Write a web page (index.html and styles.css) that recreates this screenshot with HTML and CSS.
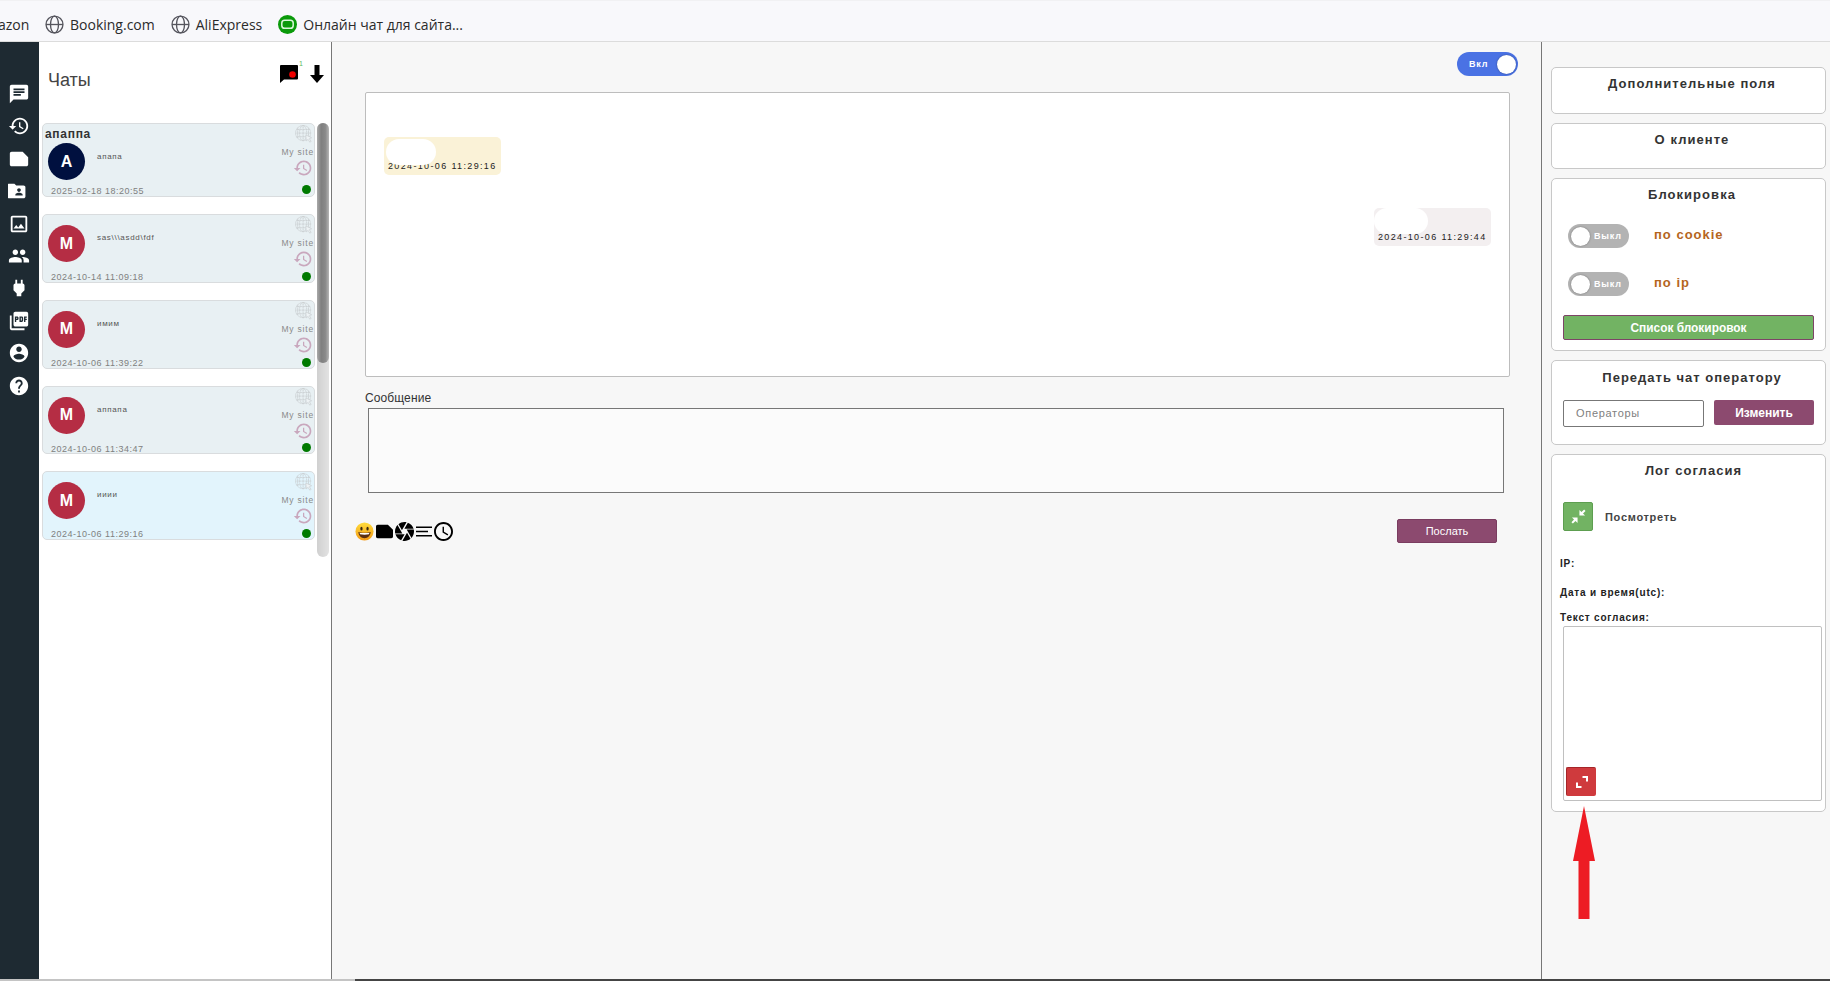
FILE: index.html
```html
<!DOCTYPE html>
<html lang="ru">
<head>
<meta charset="utf-8">
<title>Чаты</title>
<link rel="stylesheet" href="styles.css">
</head>
<body>
<svg class="defs" width="0" height="0">
  <symbol id="i-chat" viewBox="0 0 24 24"><path d="M20 2H4c-1.1 0-2 .9-2 2v18l4-4h14c1.1 0 2-.9 2-2V4c0-1.100-.9-2-2-2zM6 9h12v2H6V9zm8 5H6v-2h8v2zm4-6H6V6h12v2z"/></symbol>
  <symbol id="i-history" viewBox="0 0 24 24"><path d="M13 3c-4.970 0-9 4.030-9 9H1l3.890 3.890.07.14L9 12H6c0-3.870 3.130-7 7-7s7 3.130 7 7-3.130 7-7 7c-1.930 0-3.680-.79-4.940-2.060l-1.420 1.420C8.270 19.990 10.510 21 13 21c4.970 0 9-4.030 9-9s-4.030-9-9-9zm-1 5v5l4.280 2.540.72-1.210-3.500-2.080V8H12z"/></symbol>
  <symbol id="i-note" viewBox="0 0 24 24"><path d="M22 10l-6-6H4c-1.100 0-2 .9-2 2v12.010c0 1.100.9 1.990 2 1.990l16-.01c1.100 0 2-.89 2-1.990v-8z"/></symbol>
  <symbol id="i-folder" viewBox="0 0 24 24"><path d="M20 6h-8l-2-2H4c-1.100 0-1.990.9-1.990 2L2 18c0 1.100.9 2 2 2h16c1.100 0 2-.9 2-2V8c0-1.100-.9-2-2-2zm-5 3c1.100 0 2 .9 2 2s-.9 2-2 2-2-.9-2-2 .9-2 2-2zm4 8h-8v-1c0-1.330 2.670-2 4-2s4 .67 4 2v1z" transform="translate(-3 0)"/></symbol>
  <symbol id="i-image" viewBox="0 0 24 24"><path d="M19 5v14H5V5h14m0-2H5c-1.100 0-2 .9-2 2v14c0 1.100.9 2 2 2h14c1.100 0 2-.9 2-2V5c0-1.100-.9-2-2-2zm-4.860 8.860l-3 3.870L9 13.140 6 17h12l-3.860-5.140z"/></symbol>
  <symbol id="i-people" viewBox="0 0 24 24"><path d="M16 11c1.660 0 2.990-1.340 2.990-3S17.660 5 16 5c-1.660 0-3 1.340-3 3s1.340 3 3 3zm-8 0c1.660 0 2.990-1.340 2.990-3S9.660 5 8 5C6.340 5 5 6.340 5 8s1.340 3 3 3zm0 2c-2.330 0-7 1.170-7 3.500V19h14v-2.500c0-2.330-4.670-3.500-7-3.500zm8 0c-.29 0-.62.02-.97.05 1.160.84 1.970 1.970 1.970 3.450V19h6v-2.500c0-2.330-4.670-3.500-7-3.500z"/></symbol>
  <symbol id="i-power" viewBox="0 0 24 24"><path d="M16.010 7L16 3h-2v4h-4V3H8v4h-.01C7 6.990 6 7.990 6 8.990v5.490L9.500 18v3h5v-3l3.500-3.510v-5.500c0-1-1-2-1.990-1.990z"/></symbol>
  <symbol id="i-pdf" viewBox="0 0 24 24"><path d="M20 2H8c-1.100 0-2 .9-2 2v12c0 1.100.9 2 2 2h12c1.100 0 2-.9 2-2V4c0-1.100-.9-2-2-2zm-8.500 7.500c0 .83-.67 1.500-1.500 1.500H9v2H7.500V7H10c.83 0 1.500.67 1.500 1.500v1zm5 2c0 .83-.67 1.500-1.500 1.500h-2.500V7H15c.83 0 1.500.67 1.500 1.500v3zm4-3H19v1h1.500V11H19v2h-1.500V7h3v1.500zM9 9.500h1v-1H9v1zM4 6H2v14c0 1.100.9 2 2 2h14v-2H4V6zm10 5.500h1v-3h-1v3z"/></symbol>
  <symbol id="i-account" viewBox="0 0 24 24"><path d="M12 2C6.480 2 2 6.480 2 12s4.480 10 10 10 10-4.480 10-10S17.520 2 12 2zm0 3c1.660 0 3 1.340 3 3s-1.340 3-3 3-3-1.340-3-3 1.340-3 3-3zm0 14.200c-2.500 0-4.710-1.280-6-3.220.03-1.990 4-3.080 6-3.080 1.990 0 5.970 1.090 6 3.080-1.290 1.940-3.500 3.220-6 3.220z"/></symbol>
  <symbol id="i-help" viewBox="0 0 24 24"><path d="M12 2C6.480 2 2 6.480 2 12s4.480 10 10 10 10-4.480 10-10S17.520 2 12 2zm1 17h-2v-2h2v2zm2.070-7.750l-.9.92C13.450 12.900 13 13.500 13 15h-2v-.5c0-1.100.45-2.100 1.170-2.830l1.240-1.260c.37-.36.59-.86.59-1.410 0-1.100-.9-2-2-2s-2 .9-2 2H8c0-2.210 1.790-4 4-4s4 1.790 4 4c0 .88-.36 1.680-.93 2.250z"/></symbol>
  <symbol id="i-globe" viewBox="0 0 20 20"><g fill="none" stroke="currentColor" stroke-width="1.400"><circle cx="10" cy="10" r="8.900"/><ellipse cx="10" cy="10" rx="4.200" ry="8.900"/><path d="M1.100 10h17.800"/></g></symbol>
  <symbol id="i-site" viewBox="0 0 20 20"><g fill="none" stroke="currentColor" stroke-width=".9" stroke-dasharray="1.200 .5"><circle cx="9" cy="9" r="8.400"/><ellipse cx="9" cy="9" rx="4" ry="8.400"/><path d="M.6 9h16.800M1.800 5h14.400M1.800 13h14.400M9 .6v16.800M3 3v12M15 3v12"/></g><path d="M12 11l6.500 3.200-2.600 1 2 3-1.500.8-1.800-3-2 1.600z" fill="#eef3f5" stroke="currentColor" stroke-width=".7"/></symbol>
</svg>

<header class="bookmarks">
  <span class="bm bm-clipped">azon</span>
  <span class="bm"><svg class="bm-ic"><use href="#i-globe"/></svg>Booking.com</span>
  <span class="bm"><svg class="bm-ic"><use href="#i-globe"/></svg>AliExpress</span>
  <span class="bm"><svg class="bm-ic" viewBox="0 0 20 20"><circle cx="10" cy="10" r="10" fill="#0b9a0b"/><rect x="4" y="5.500" width="12" height="8.500" rx="3" fill="none" stroke="#d9f5d9" stroke-width="1.600"/></svg>Онлайн чат для сайта...</span>
</header>

<div class="app">
  <nav class="rail">
    <svg class="rail-ic"><use href="#i-chat"/></svg>
    <svg class="rail-ic"><use href="#i-history"/></svg>
    <svg class="rail-ic"><use href="#i-note"/></svg>
    <svg class="rail-ic"><use href="#i-folder"/></svg>
    <svg class="rail-ic"><use href="#i-image"/></svg>
    <svg class="rail-ic"><use href="#i-people"/></svg>
    <svg class="rail-ic"><use href="#i-power"/></svg>
    <svg class="rail-ic"><use href="#i-pdf"/></svg>
    <svg class="rail-ic"><use href="#i-account"/></svg>
    <svg class="rail-ic"><use href="#i-help"/></svg>
  </nav>

  <aside class="chats">
    <div class="chats-head">
      <h1 class="chats-title">Чаты</h1>
      <div class="chats-tools">
        <span class="notif">
          <svg class="notif-ic" viewBox="0 0 18 18"><path d="M1 0h16a1 1 0 0 1 1 1v12.500a1 1 0 0 1-1 1H4L0 18V1a1 1 0 0 1 1-1z"/><circle cx="12.500" cy="9.500" r="3.300" fill="#f00000"/></svg>
          <span class="notif-count">1</span>
        </span>
        <svg class="down-ic" viewBox="0 0 14 18"><path d="M4.500 0h5v10H14l-7 8-7-8h4.500z"/></svg>
      </div>
    </div>
    <div class="chats-scroll">
      <div class="chat-list">
        <article class="card">
          <div class="card-left">
            <div class="card-name">апаппа</div>
            <div class="card-body"><span class="avatar avatar-navy">A</span><span class="card-msg">апапа</span></div>
            <div class="card-date card-date-first">2025-02-18 18:20:55</div>
          </div>
          <div class="card-right">
            <svg class="site-ic"><use href="#i-site"/></svg>
            <span class="site-name">My site</span>
            <svg class="hist-ic"><use href="#i-history"/></svg>
            <span class="dot"></span>
          </div>
        </article>
        <article class="card card-short">
          <div class="card-left">
            <div class="card-body"><span class="avatar">M</span><span class="card-msg">sas\\\asdd\fdf</span></div>
            <div class="card-date">2024-10-14 11:09:18</div>
          </div>
          <div class="card-right">
            <svg class="site-ic"><use href="#i-site"/></svg>
            <span class="site-name">My site</span>
            <svg class="hist-ic"><use href="#i-history"/></svg>
            <span class="dot"></span>
          </div>
        </article>
        <article class="card card-short">
          <div class="card-left">
            <div class="card-body"><span class="avatar">M</span><span class="card-msg">имим</span></div>
            <div class="card-date">2024-10-06 11:39:22</div>
          </div>
          <div class="card-right">
            <svg class="site-ic"><use href="#i-site"/></svg>
            <span class="site-name">My site</span>
            <svg class="hist-ic"><use href="#i-history"/></svg>
            <span class="dot"></span>
          </div>
        </article>
        <article class="card card-short">
          <div class="card-left">
            <div class="card-body"><span class="avatar">M</span><span class="card-msg">аппапа</span></div>
            <div class="card-date">2024-10-06 11:34:47</div>
          </div>
          <div class="card-right">
            <svg class="site-ic"><use href="#i-site"/></svg>
            <span class="site-name">My site</span>
            <svg class="hist-ic"><use href="#i-history"/></svg>
            <span class="dot"></span>
          </div>
        </article>
        <article class="card card-short card-active">
          <div class="card-left">
            <div class="card-body"><span class="avatar">M</span><span class="card-msg">ииии</span></div>
            <div class="card-date">2024-10-06 11:29:16</div>
          </div>
          <div class="card-right">
            <svg class="site-ic"><use href="#i-site"/></svg>
            <span class="site-name">My site</span>
            <svg class="hist-ic"><use href="#i-history"/></svg>
            <span class="dot"></span>
          </div>
        </article>
      </div>
      <div class="scrollbar"><div class="scrollbar-thumb"></div></div>
    </div>
  </aside>

  <main class="center">
    <div class="center-top">
      <div class="toggle toggle-on"><span class="toggle-text">Вкл</span><span class="knob"></span></div>
    </div>
    <section class="messages">
      <div class="bubble bubble-in"><span class="blot blot-in"></span><span class="bubble-time">2024-10-06 11:29:16</span></div>
      <div class="bubble bubble-out"><span class="blot blot-out"></span><span class="bubble-time">2024-10-06 11:29:44</span></div>
    </section>
    <label class="msg-label">Сообщение</label>
    <div class="msg-input"></div>
    <div class="composer-bar">
      <div class="composer-icons">
        <svg class="c-ic" viewBox="0 0 20 20"><defs><linearGradient id="sm" x1="0" y1="0" x2="0" y2="1"><stop offset="0" stop-color="#ffdc3c"/><stop offset="1" stop-color="#f39a16"/></linearGradient></defs><circle cx="10" cy="10" r="9.500" fill="url(#sm)"/><ellipse cx="6.800" cy="7" rx="1.200" ry="2" fill="#3a2a10"/><ellipse cx="13.200" cy="7" rx="1.200" ry="2" fill="#3a2a10"/><path d="M3.500 10.500c2 1 11 1 13 0-.3 4-3 6.500-6.500 6.500s-6.200-2.500-6.500-6.500z" fill="#5b2f10"/><path d="M4.800 11.200c2.500.6 8 .6 10.400 0l-.5 1.800c-2.800.5-6.600.5-9.400 0z" fill="#fff"/></svg>
        <svg class="c-ic c-note" viewBox="2 4 20 16"><path d="M22 10l-6-6H4c-1.100 0-2 .9-2 2v12.010c0 1.100.9 1.990 2 1.990l16-.01c1.100 0 2-.89 2-1.990v-8z"/></svg>
        <svg class="c-ic" viewBox="2 2 20 20"><path d="M9.400 10.500l4.770-8.260C13.470 2.090 12.750 2 12 2c-2.400 0-4.600.85-6.320 2.260l3.660 6.340.06-.1zM21.540 9c-.92-2.920-3.150-5.260-6-6.340L11.880 9h9.660zm.26 1h-7.490l.29.5 4.760 8.250C21 16.970 22 14.610 22 12c0-.69-.07-1.350-.2-2zM8.540 12l-3.900-6.750C3.010 7.030 2 9.390 2 12c0 .69.07 1.350.2 2h7.490l-1.150-2zm-6.080 3c.92 2.920 3.150 5.260 6 6.340L12.120 15H2.460zm11.270 0l-3.900 6.760c.7.15 1.420.24 2.170.24 2.400 0 4.600-.85 6.320-2.260l-3.660-6.340-.93 1.600z"/></svg>
        <svg class="c-ic c-lines" viewBox="0 0 16 12"><path d="M0 1h16v1.600H0zM0 5.200h12v1.600H0zM0 9.400h16V11H0z"/></svg>
        <svg class="c-ic" viewBox="2 2 20 20"><path d="M11.990 2C6.470 2 2 6.480 2 12s4.470 10 9.990 10C17.520 22 22 17.520 22 12S17.520 2 11.990 2zM12 20c-4.420 0-8-3.580-8-8s3.580-8 8-8 8 3.580 8 8-3.580 8-8 8zm.5-13H11v6l5.250 3.150.75-1.230-4.500-2.670z"/></svg>
      </div>
      <button class="btn-send">Послать</button>
    </div>
  </main>

  <aside class="side">
    <section class="box box-empty"><h2 class="box-title">Дополнительные поля</h2></section>
    <section class="box box-empty"><h2 class="box-title">О клиенте</h2></section>
    <section class="box box-block">
      <h2 class="box-title">Блокировка</h2>
      <div class="block-row">
        <div class="toggle toggle-off"><span class="knob"></span><span class="toggle-text">Выкл</span></div>
        <span class="block-label">по cookie</span>
      </div>
      <div class="block-row">
        <div class="toggle toggle-off"><span class="knob"></span><span class="toggle-text">Выкл</span></div>
        <span class="block-label">по ip</span>
      </div>
      <button class="btn-list">Список блокировок</button>
    </section>
    <section class="box box-transfer">
      <h2 class="box-title box-title-transfer">Передать чат оператору</h2>
      <div class="transfer-row">
        <div class="op-input">Операторы</div>
        <button class="btn-change">Изменить</button>
      </div>
    </section>
    <section class="box box-log">
      <h2 class="box-title box-title-log">Лог согласия</h2>
      <div class="log-view">
        <span class="btn-green"><svg class="sq-ic" viewBox="0 0 16 16"><path d="M9 1v6h6l-2.200-2.200L15.500 2 14 .5l-2.800 2.800zM7 15V9H1l2.200 2.200L.5 14 2 15.500l2.800-2.800z"/></svg></span>
        <span class="log-view-text">Посмотреть</span>
      </div>
      <div class="log-field log-ip">IP:</div>
      <div class="log-field log-date">Дата и время(utc):</div>
      <div class="log-field log-text">Текст согласия:</div>
      <div class="log-area">
        <span class="btn-red"><svg class="sq-ic" viewBox="0 0 12 12"><path d="M6.500 0H12v5.500h-2V2H6.500zM0 6.500h2V10h3.500v2H0z"/></svg></span>
      </div>
    </section>
  </aside>
</div>

<div class="bottom-line"><span class="bottom-line-left"></span><span class="bottom-line-right"></span></div>
<svg class="arrow" viewBox="0 0 22 113"><path d="M11 0l11 55h-5.500v58h-11V55H0z"/></svg>
</body>
</html>
```
FILE: styles.css
```css
* { box-sizing: border-box; }
html, body { margin: 0; padding: 0; height: 981px; overflow: hidden; }
body { position: relative; display: flex; flex-direction: column; font-family: "Liberation Sans", Arial, sans-serif; background: #f7f7f7; color: #333; }
.defs { position: absolute; }

.bookmarks { height: 42px; flex: none; display: flex; align-items: center; background: #f8f8fb; border-top: 1px solid #f1f1f3; border-bottom: 1px solid #dcdcdc; font-family: "Open Sans", sans-serif; font-size: 14px; color: #2b2b2b; padding-top: 7px; padding-left: 45px; gap: 16px; position: relative; white-space: nowrap; }
.bm { display: flex; align-items: center; gap: 6px; }
.bm-clipped { position: absolute; left: -2px; }
.bm-ic { width: 19px; height: 19px; flex: none; color: #55555d; }

.app { flex: 1; display: flex; min-height: 0; }

.rail { width: 39px; flex: none; background: #1e2a32; display: flex; flex-direction: column; align-items: center; padding: 41px 2px 0 0; gap: 10.400px; }
.rail-ic { width: 22px; height: 22px; fill: #fff; flex: none; }

.chats { width: 293px; flex: none; background: #fff; border-right: 1px solid #777; display: flex; flex-direction: column; }
.chats-head { height: 81px; flex: none; display: flex; justify-content: space-between; padding: 0 7px 0 9px; position: relative; }
.chats-title { margin: 26.500px 0 0; font-size: 18px; line-height: 22px; font-weight: 400; color: #444; }
.chats-tools { display: flex; gap: 12px; padding-top: 23px; }
.notif { position: relative; display: block; width: 18px; height: 18px; }
.notif-ic { width: 18px; height: 18px; display: block; }
.notif-count { position: absolute; left: 19px; top: -5px; font-size: 7px; color: #5cb85c; }
.down-ic { width: 14px; height: 18px; }

.chats-scroll { flex: 1; display: flex; padding-left: 3px; min-height: 0; }
.chat-list { width: 273px; flex: none; display: flex; flex-direction: column; gap: 17px; }
.card { display: flex; justify-content: space-between; height: 74px; background: #e8f0f3; border: 1px solid #d9dcde; border-radius: 5px; color: #555; flex: none; }
.card-short { height: 68.800px; }
.card-active { background: #e2f4fc; }
.card-left { display: flex; flex-direction: column; min-width: 0; padding-left: 5px; }
.card-name { font-size: 12px; line-height: 13px; font-weight: 700; letter-spacing: .7px; color: #333; margin-left: -3px; margin-top: 4px; }
.card-body { display: flex; align-items: flex-start; gap: 12px; margin-top: 10px; }
.card-name + .card-body { margin-top: 2px; }
.avatar { width: 37px; height: 37px; border-radius: 50%; background: #b52d44; color: #fff; font-weight: 700; font-size: 16px; display: flex; align-items: center; justify-content: center; flex: none; }
.avatar-navy { background: #00103f; }
.card-msg { font-size: 8px; line-height: 10px; letter-spacing: .7px; margin-top: 8px; color: #555; }
.card-name + .card-body .card-msg { margin-top: 9px; }
.card-date { font-size: 9px; line-height: 10px; letter-spacing: .5px; color: #808080; margin-top: 10px; margin-left: 3px; }
.card-date-first { margin-top: 6px; }
.card-right { width: 28px; flex: none; display: flex; flex-direction: column; align-items: flex-end; padding: 1px 0 0 0; position: relative; }
.site-ic { width: 18px; height: 18px; color: #c6cbce; flex: none; margin-right: 1px; }
.site-name { font-size: 8.500px; line-height: 10px; letter-spacing: .8px; color: #8a8a8a; white-space: nowrap; margin-top: 4px; }
.hist-ic { width: 20px; height: 20px; fill: #c9a7bd; flex: none; margin-right: 1px; margin-top: 1px; }
.dot { width: 9px; height: 9px; border-radius: 50%; background: #007a00; margin-top: auto; margin-bottom: 2px; margin-right: 3px; }
.card-short .dot { margin-bottom: 1px; }

.scrollbar { width: 12px; height: 434px; margin-left: 2px; background: linear-gradient(to right, #d0d0d0, #e2e2e2); border-radius: 6px; }
.scrollbar-thumb { height: 240px; border-radius: 6px; background: linear-gradient(to right, #aaa, #7f7f7f 35%, #8a8a8a 70%, #b5b5b5); }

.center { width: 1210px; flex: none; padding: 10px 31px 0 33px; border-right: 1px solid #777; display: flex; flex-direction: column; background: #f7f7f7; }
.center-top { display: flex; justify-content: flex-end; margin-right: -8px; margin-bottom: 16px; height: 24px; }
.toggle { width: 61px; height: 24px; border-radius: 12px; display: flex; align-items: center; font-size: 9px; font-weight: 700; letter-spacing: .8px; color: #fff; flex: none; }
.toggle-on { background: #4a72e4; justify-content: space-between; padding: 0 2px 0 12px; }
.toggle-off { background: #b3b3b3; gap: 4px; padding-left: 3px; }
.knob { width: 19px; height: 19px; border-radius: 50%; background: #fff; box-shadow: 0 0 2px rgba(0,0,0,.4); flex: none; }
.messages { height: 285px; flex: none; background: #fff; border: 1px solid #bdbdbd; border-radius: 2px; padding: 44px 18px 0 18px; display: flex; flex-direction: column; gap: 33px; }
.bubble { position: relative; width: 117px; height: 38px; border-radius: 5px; font-size: 9px; letter-spacing: 1.350px; color: #222; display: flex; align-items: flex-end; padding: 0 0 3px 4px; }
.bubble-in { background: #faf2d7; }
.bubble-out { background: #f3eff0; align-self: flex-end; }
.bubble-time { white-space: nowrap; line-height: 11px; }
.blot { position: absolute; background: #fff; border-radius: 13px; height: 26px; }
.blot-in { left: 2px; top: 2px; width: 50px; }
.blot-out { left: 0; top: 0; width: 54px; }

.msg-label { font-size: 12px; letter-spacing: .1px; line-height: 14px; color: #333; margin-top: 14px; }
.msg-input { height: 85px; margin: 3px 6px 0 3px; background: #fbfbfb; border: 1px solid #777; flex: none; }
.composer-bar { display: flex; justify-content: space-between; margin: 26px 13px 0 -10px; align-items: center; }
.composer-icons { display: flex; align-items: center; gap: 2px; height: 24px; }
.c-ic { width: 19px; height: 19px; flex: none; }
.c-note { width: 17px; height: 15px; }
.c-lines { height: 13px; width: 16px; }
.btn-send { width: 100px; height: 24px; background: #8c4a6f; color: #fff; border: 1px solid #7a3d60; border-radius: 2px; font: 400 11px "Liberation Sans", sans-serif; padding: 0; }

.side { flex: 1; padding: 25px 4px 0 9px; display: flex; flex-direction: column; gap: 9px; min-width: 0; }
.box { background: #fff; border: 1px solid #c8c8c8; border-radius: 5px; flex: none; }
.box-empty { height: 46.500px; }
.box-title { margin: 8px 0 0; font-size: 13px; line-height: 16px; font-weight: 700; letter-spacing: 1.050px; text-align: center; color: #333; padding-left: 7px; }
.box-title-transfer { margin-top: 9px; letter-spacing: 1px; }
.box-title-log { padding-left: 5px; }
.box-block { height: 173px; padding: 0 11px; }
.block-row { display: flex; align-items: center; gap: 25px; margin-top: 21px; padding-left: 5px; }
.block-row + .block-row { margin-top: 24px; }
.block-label { font-size: 13px; font-weight: 700; letter-spacing: 1px; color: #b5651d; margin-top: -3px; }
.btn-list { display: block; width: 251px; height: 25px; margin-top: 19px; background: #72b363; color: #fff; border: 1px solid #7d4467; border-radius: 2px; font: 700 11.900px "Liberation Sans", sans-serif; padding: 0; }
.box-transfer { height: 85px; padding: 0 11px; }
.transfer-row { display: flex; justify-content: space-between; margin-top: 14px; align-items: flex-start; }
.op-input { width: 141px; height: 27px; border: 1px solid #777; border-radius: 2px; background: #fff; font-size: 11px; letter-spacing: .7px; line-height: 25px; padding-left: 12px; color: #808080; }
.btn-change { width: 100px; height: 25px; background: #8c4a6f; color: #fff; border: none; border-radius: 2px; font: 700 12px "Liberation Sans", sans-serif; padding: 0; }
.box-log { height: 358px; padding: 0 3px 0 8px; }
.log-view { display: flex; align-items: center; gap: 12px; margin: 23px 0 0 3px; }
.btn-green { width: 30px; height: 29px; background: #72b363; border: 1px solid #5d9e50; border-radius: 2px; display: flex; align-items: center; justify-content: center; }
.sq-ic { width: 15px; height: 15px; fill: #fff; }
.log-view-text { font-size: 11px; font-weight: 700; letter-spacing: .7px; color: #444; }
.log-field { font-size: 10px; line-height: 12px; font-weight: 700; letter-spacing: .8px; color: #222; }
.log-ip { margin-top: 27px; }
.log-date { margin-top: 17px; }
.log-text { margin-top: 13px; }
.log-area { height: 175px; margin: 2px 0 0 3px; border: 1px solid #c0c0c0; border-radius: 2px; background: #fff; padding: 140px 0 0 2px; }
.btn-red { width: 30px; height: 29px; background: #cf3a3d; border-radius: 2px; border-left: 1px solid #a52528; border-top: 1px solid #a52528; display: flex; align-items: center; justify-content: center; }
.btn-red .sq-ic { width: 12px; height: 12px; }

.bottom-line { height: 2px; flex: none; display: flex; }
.bottom-line-left { width: 355px; background: #c4c4c4; }
.bottom-line-right { flex: 1; background: #444; }
.arrow { position: absolute; left: 1573px; top: 806px; width: 22px; height: 113px; fill: #ed1c24; }
```
